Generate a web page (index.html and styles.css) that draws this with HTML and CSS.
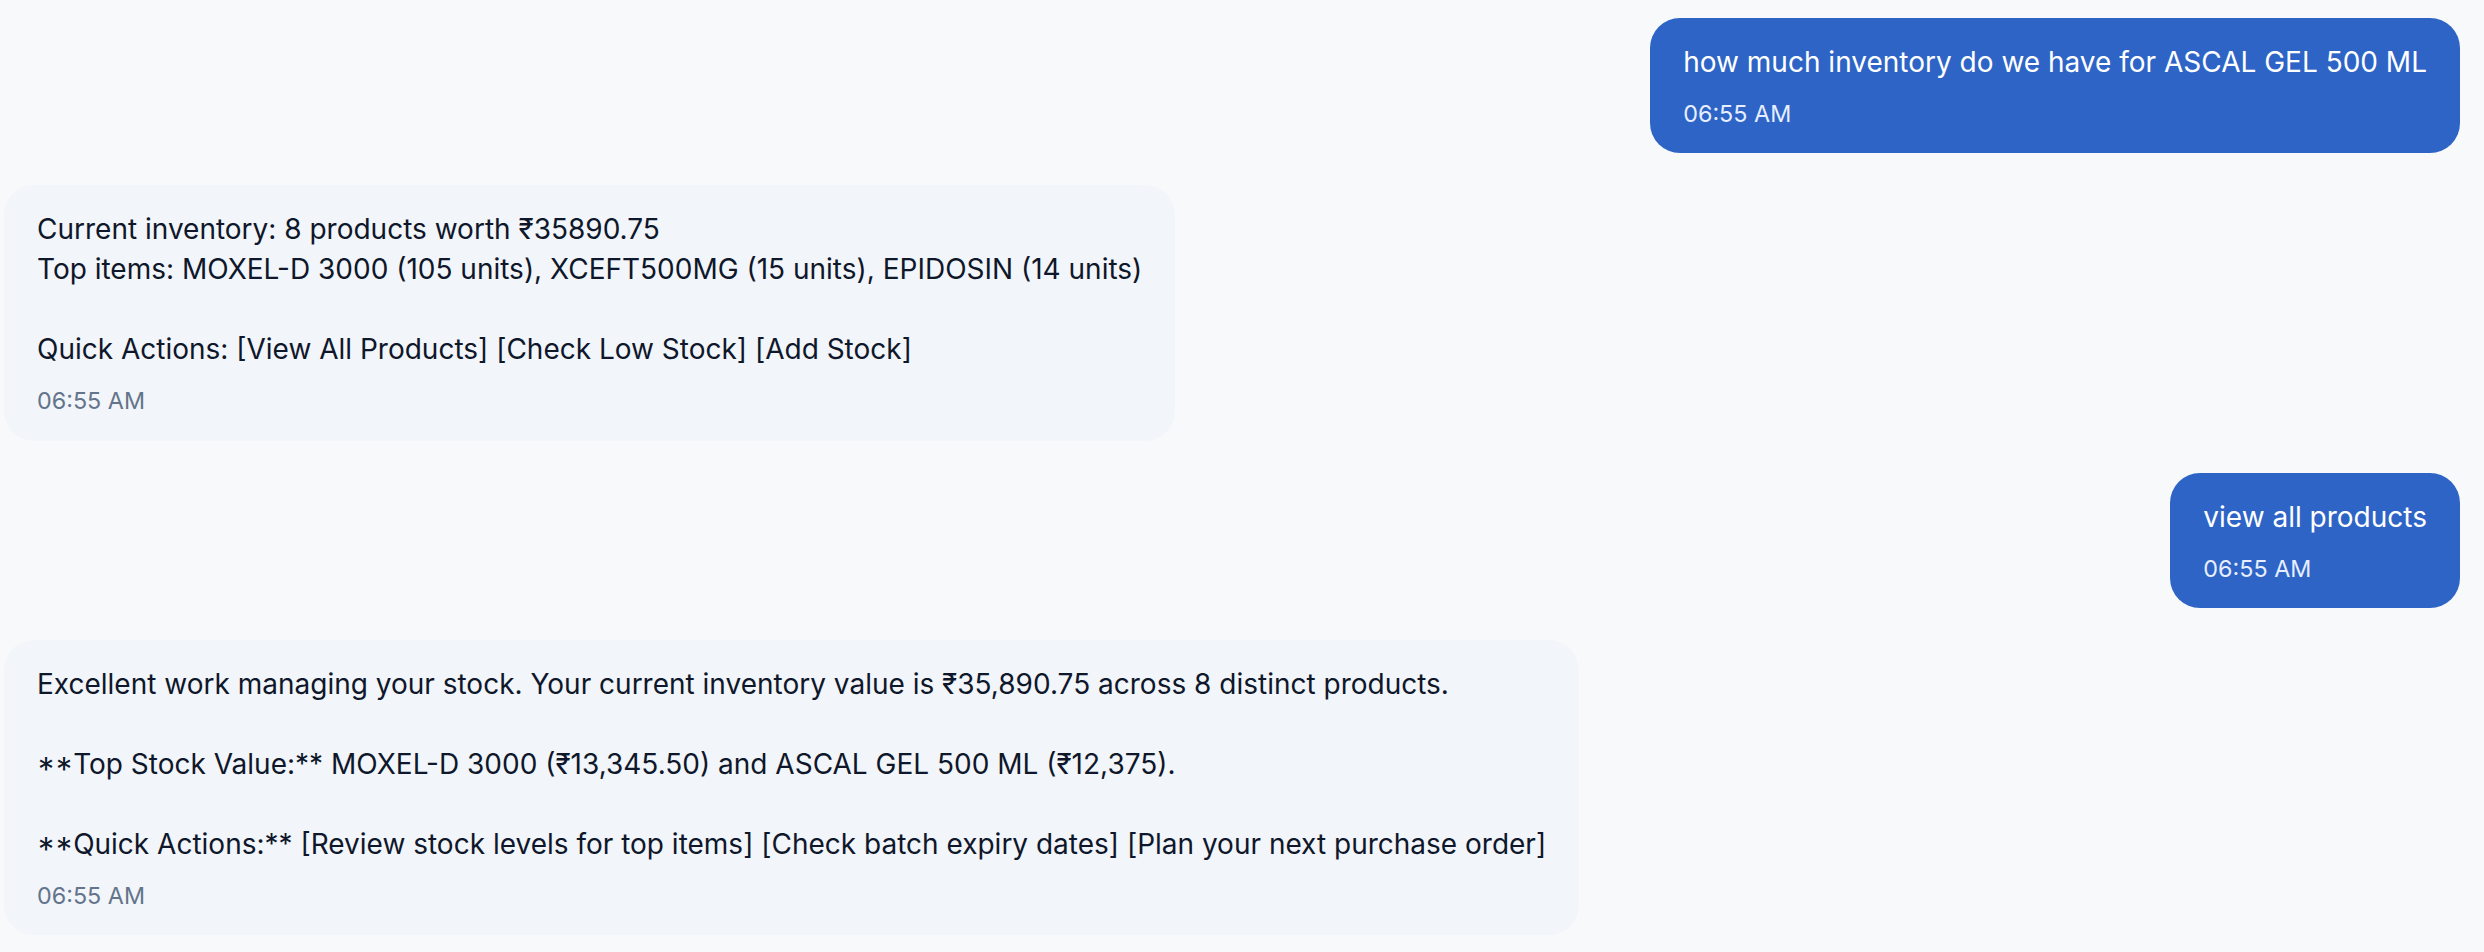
FILE: index.html
```html
<!DOCTYPE html>
<html lang="en">
<head>
<meta charset="utf-8">
<title>Chat</title>
<link rel="stylesheet" href="styles.css">
</head>
<body>
<main class="chat">
  <div class="row row-user">
    <div class="bubble bubble-user">
      <div class="msg">how much inventory do we have for ASCAL GEL 500 ML</div>
      <div class="time">06:55 AM</div>
    </div>
  </div>
  <div class="row row-bot">
    <div class="bubble bubble-bot">
      <div class="msg">Current inventory: 8 products worth ₹35890.75
Top items: MOXEL-D 3000 (105 units), XCEFT500MG (15 units), EPIDOSIN (14 units)

Quick Actions: [View All Products] [Check Low Stock] [Add Stock]</div>
      <div class="time">06:55 AM</div>
    </div>
  </div>
  <div class="row row-user">
    <div class="bubble bubble-user">
      <div class="msg">view all products</div>
      <div class="time">06:55 AM</div>
    </div>
  </div>
  <div class="row row-bot">
    <div class="bubble bubble-bot">
      <div class="msg">Excellent work managing your stock. Your current inventory value is ₹35,890.75 across 8 distinct products.

<span class="star">**</span>Top Stock Value:** MOXEL-D 3000 (₹13,345.50) and ASCAL GEL 500 ML (₹12,375).

<span class="star">**</span>Quick Actions:** [Review stock levels for top items] [Check batch expiry dates] [Plan your next purchase order]</div>
      <div class="time">06:55 AM</div>
    </div>
  </div>
</main>
</body>
</html>
```
FILE: styles.css
```css
html, body {
  margin: 0;
  padding: 0;
  background: #f8f9fb;
}
body {
  font-family: Inter, "Noto Sans", "DejaVu Sans", sans-serif;
  color: #0f172a;
  overflow: hidden;
}
.chat {
  display: flex;
  flex-direction: column;
  gap: 32px;
  padding: 18px 24px 0 4px;
}
.row {
  display: flex;
}
.row-user {
  justify-content: flex-end;
}
.row-bot {
  justify-content: flex-start;
}
.bubble {
  border-radius: 30px;
  padding: 24px 33px 23px 33px;
  max-width: 70%;
}
.bubble-user {
  background: #2d64c6;
  color: #ffffff;
}
.bubble-bot {
  background: #f2f5fa;
  color: #0f172a;
}
.msg {
  font-size: 28px;
  line-height: 40px;
  white-space: pre-line;
}
.star {
  font-feature-settings: "case" 1;
}
.time {
  margin-top: 15px;
  font-size: 23.33px;
  line-height: 33.33px;
}
.bubble-user .time {
  color: #e6eeff;
}
.bubble-bot .time {
  color: #64748b;
}
```
